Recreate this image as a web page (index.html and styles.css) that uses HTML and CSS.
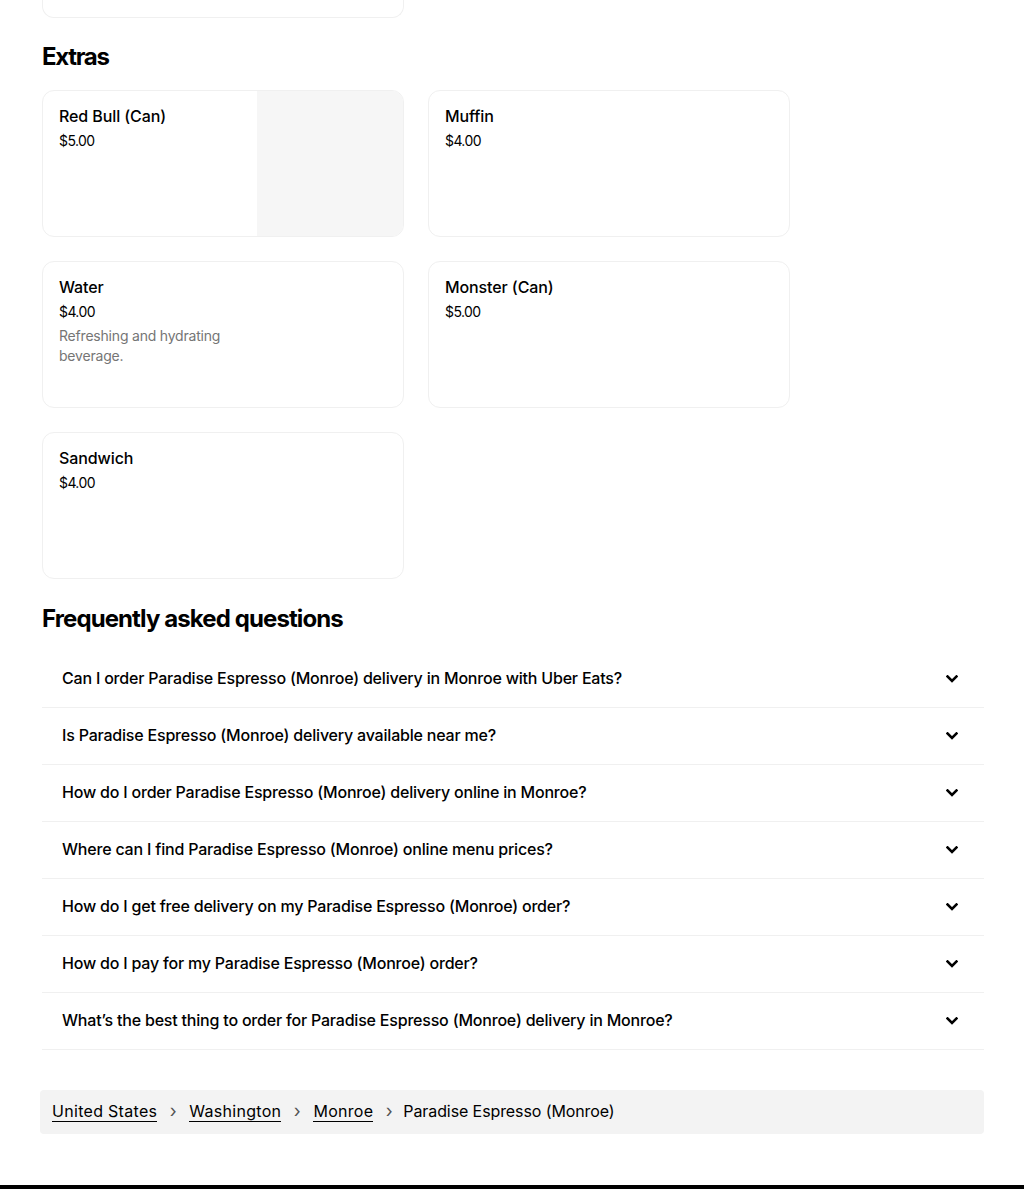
FILE: index.html
```html
<!DOCTYPE html>
<html lang="en">
<head>
<meta charset="utf-8">
<title>Paradise Espresso (Monroe)</title>
<link rel="stylesheet" href="styles.css">
</head>
<body>
<main class="page">
  <div class="menu-grid">
    <div class="card card-tail"></div>
  </div>

  <h2 class="section-title extras-title">Extras</h2>
  <div class="menu-grid">
    <div class="card">
      <div class="card-text">
        <div class="item-name">Red Bull (Can)</div>
        <div class="item-price">$5.00</div>
      </div>
      <div class="card-image"></div>
    </div>
    <div class="card">
      <div class="card-text">
        <div class="item-name">Muffin</div>
        <div class="item-price">$4.00</div>
      </div>
    </div>
    <div class="card">
      <div class="card-text">
        <div class="item-name">Water</div>
        <div class="item-price">$4.00</div>
        <div class="item-desc">Refreshing and hydrating beverage.</div>
      </div>
    </div>
    <div class="card">
      <div class="card-text">
        <div class="item-name">Monster (Can)</div>
        <div class="item-price">$5.00</div>
      </div>
    </div>
    <div class="card">
      <div class="card-text">
        <div class="item-name">Sandwich</div>
        <div class="item-price">$4.00</div>
      </div>
    </div>
  </div>

  <h2 class="section-title faq-title">Frequently asked questions</h2>
  <ul class="faq">
    <li class="faq-row"><span>Can I order Paradise Espresso (Monroe) delivery in Monroe with Uber Eats?</span><svg class="chev" viewBox="0 0 12 8" width="12" height="8"><path d="M1.5 1.5 L6 6 L10.5 1.5" /></svg></li>
    <li class="faq-row"><span>Is Paradise Espresso (Monroe) delivery available near me?</span><svg class="chev" viewBox="0 0 12 8" width="12" height="8"><path d="M1.5 1.5 L6 6 L10.5 1.5" /></svg></li>
    <li class="faq-row"><span>How do I order Paradise Espresso (Monroe) delivery online in Monroe?</span><svg class="chev" viewBox="0 0 12 8" width="12" height="8"><path d="M1.5 1.5 L6 6 L10.5 1.5" /></svg></li>
    <li class="faq-row"><span>Where can I find Paradise Espresso (Monroe) online menu prices?</span><svg class="chev" viewBox="0 0 12 8" width="12" height="8"><path d="M1.5 1.5 L6 6 L10.5 1.5" /></svg></li>
    <li class="faq-row"><span>How do I get free delivery on my Paradise Espresso (Monroe) order?</span><svg class="chev" viewBox="0 0 12 8" width="12" height="8"><path d="M1.5 1.5 L6 6 L10.5 1.5" /></svg></li>
    <li class="faq-row"><span>How do I pay for my Paradise Espresso (Monroe) order?</span><svg class="chev" viewBox="0 0 12 8" width="12" height="8"><path d="M1.5 1.5 L6 6 L10.5 1.5" /></svg></li>
    <li class="faq-row"><span>What’s the best thing to order for Paradise Espresso (Monroe) delivery in Monroe?</span><svg class="chev" viewBox="0 0 12 8" width="12" height="8"><path d="M1.5 1.5 L6 6 L10.5 1.5" /></svg></li>
  </ul>

  <nav class="crumbs">
    <a href="#" class="crumb-link">United States</a>
    <span class="crumb-sep">›</span>
    <a href="#" class="crumb-link">Washington</a>
    <span class="crumb-sep">›</span>
    <a href="#" class="crumb-link">Monroe</a>
    <span class="crumb-sep">›</span>
    <span class="crumb-current">Paradise Espresso (Monroe)</span>
  </nav>
</main>
<footer class="footer"></footer>
</body>
</html>
```

FILE: styles.css
```css
* { box-sizing: border-box; }

html, body {
  margin: 0;
  padding: 0;
  background: #ffffff;
}

body {
  font-family: Inter, "Noto Sans", Arial, sans-serif;
  color: #000000;
}

.page {
  padding: 0 40px 0 40px;
}

.menu-grid {
  display: grid;
  grid-template-columns: 362px 362px;
  gap: 24px;
  padding-left: 2px;
}

.card {
  display: flex;
  height: 147px;
  border: 1px solid #f0f0f0;
  border-radius: 12px;
  overflow: hidden;
  background: #fff;
}

.card-tail {
  height: 18px;
  border-top: none;
  border-top-left-radius: 0;
  border-top-right-radius: 0;
}

.card-text {
  flex: 1;
  padding: 15px 16px 16px 16px;
  max-width: 215px;
}

.card-image {
  width: 146px;
  height: 100%;
  background: #f6f6f6;
}

.item-name {
  font-size: 16px;
  line-height: 20px;
  font-weight: 500;
  color: #000;
  margin-bottom: 5px;
  letter-spacing: -0.1px;
}

.item-price {
  font-size: 14px;
  line-height: 20px;
  color: #000;
  margin-bottom: 4px;
  letter-spacing: -0.6px;
}

.item-desc {
  font-size: 14px;
  line-height: 20px;
  color: #757575;
  letter-spacing: -0.2px;
}

.section-title {
  font-size: 24px;
  line-height: 32px;
  font-weight: 700;
  margin: 23px 0 17px 2px;
  letter-spacing: -0.9px;
}

.extras-title {
  letter-spacing: -1.3px;
}

.faq-title {
  margin-top: 24px;
  margin-bottom: 16px;
}

.faq {
  list-style: none;
  margin: 0 0 0 2px;
  padding: 0;
}

.faq-row {
  display: flex;
  align-items: center;
  justify-content: space-between;
  height: 57px;
  padding: 0 26px 3px 20px;
  border-bottom: 1px solid #f0f0f0;
  font-size: 16px;
  line-height: 20px;
  font-weight: 500;
  letter-spacing: -0.2px;
}

.chev {
  display: block;
  fill: none;
  stroke: #000;
  stroke-width: 2.6;
  stroke-linecap: square;
  margin-top: 2px;
}

.crumbs {
  display: flex;
  align-items: center;
  gap: 12px;
  margin-top: 40px;
  height: 44px;
  padding: 0 12px 2px 12px;
  background: #f3f3f3;
  border-radius: 4px;
  font-size: 16px;
  line-height: 20px;
  letter-spacing: 0.3px;
}

.crumb-link {
  color: #000;
  text-decoration: none;
  border-bottom: 1px solid #000;
  line-height: 20px;
  padding-top: 1px;
}

.crumb-sep {
  color: #545454;
  font-size: 18px;
  width: 8px;
  text-align: center;
}

.crumb-current {
  color: #000;
  letter-spacing: -0.1px;
  margin-left: -2px;
}

.footer {
  margin-top: 51px;
  height: 40px;
  background: #000;
}
```
